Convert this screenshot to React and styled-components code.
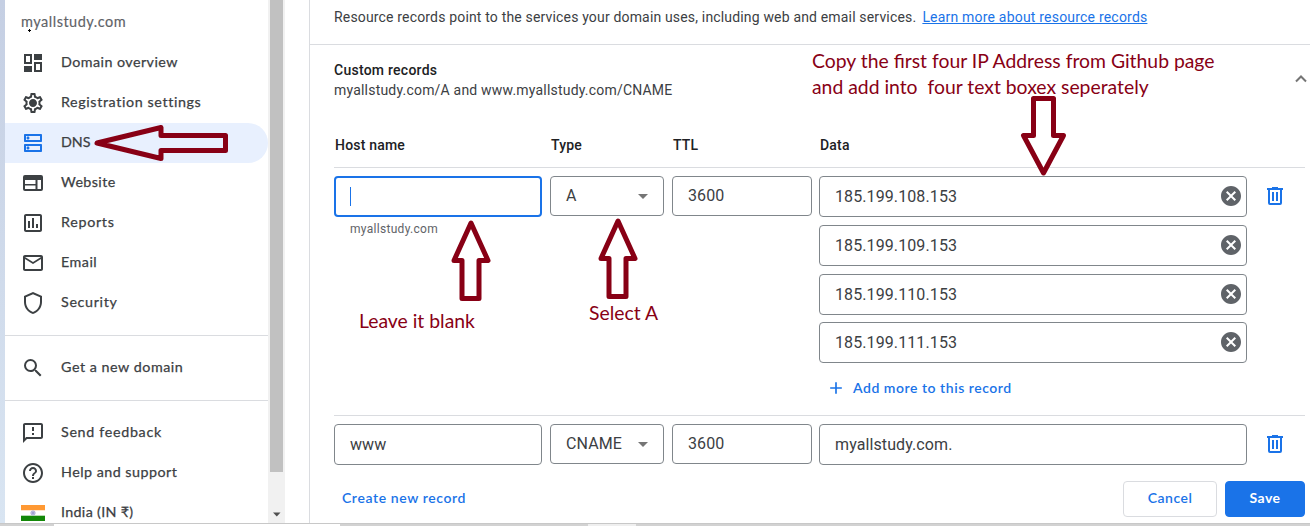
import React from "react";
import styled, { createGlobalStyle } from "styled-components";
import {
  MdOutlineSettings, MdOutlineDns, MdOutlineAssessment, MdMailOutline,
  MdSearch, MdOutlineFeedback, MdHelpOutline, MdCancel, MdAdd, MdArrowDropDown,
} from "react-icons/md";

const Global = createGlobalStyle`
  *, *::before, *::after { box-sizing: border-box; }
  body { margin: 0; background: #fff; overflow: hidden; }
`;

const brand = `"Lato", "Inter", sans-serif`;
const body = `"Roboto", "Liberation Sans", sans-serif`;

const Screen = styled.div`
  position: relative;
  width: 1310px;
  height: 526px;
  display: flex;
  flex-direction: column;
  overflow: hidden;
  background: #fff;
  font-family: ${body};
  color: #3c4043;
`;
const Columns = styled.div`
  display: flex;
  height: 523px;
  flex: none;
  overflow: hidden;
`;
const Edge = styled.div`
  width: 5px;
  flex: none;
  background: linear-gradient(#c5cfe3, #d9e5f2);
`;
const Sidebar = styled.nav`
  width: 263px;
  flex: none;
  height: 523px;
  overflow: hidden;
`;
const SiteName = styled.div`
  height: 43px;
  padding: 1px 0 0 16px;
  font: 400 14.5px/42px ${brand};
  letter-spacing: 0.5px;
  -webkit-text-stroke: 0.15px currentColor;
  color: #5f6368;
`;
const NavRow = styled.a`
  display: flex;
  align-items: center;
  height: 40px;
  padding-left: 16px;
  gap: 16px;
  border-radius: 0 20px 20px 0;
  background: ${(p) => (p.$active ? "#e8f0fe" : "transparent")};
  svg { flex: none; color: ${(p) => (p.$active ? "#1a73e8" : "#3c4043")}; }
`;
const NavLabel = styled.span`
  font: 400 14.3px/20px ${brand};
  letter-spacing: ${(p) => p.$track}px;
  -webkit-text-stroke: 0.25px currentColor;
  padding-bottom: 2px;
  white-space: nowrap;
`;
const Divider = styled.div`
  height: 1px;
  margin: 12px 0;
  background: #dadce0;
`;
const Scrollbar = styled.div`
  width: 17px;
  flex: none;
  display: flex;
  flex-direction: column;
  align-items: center;
  justify-content: space-between;
  background: #f1f1f1;
  padding-bottom: 6px;
`;
const Thumb = styled.div`
  width: 13px;
  height: 472px;
  background: #c1c1c1;
`;
const Main = styled.main`
  flex: 1;
  margin-left: 24px;
  border-left: 1px solid #dadce0;
  display: flex;
  flex-direction: column;
  & > * { flex: none; }
`;
const Intro = styled.p`
  margin: 0;
  height: 45px;
  padding: 7px 0 0 24px;
  border-bottom: 1px solid #dadce0;
  font-size: 14px;
  line-height: 20px;
  letter-spacing: 0.167px;
  white-space: nowrap;
`;
const Link = styled.a`
  color: #1a73e8;
  text-decoration: underline;
  letter-spacing: 0.2px;
  margin-left: 2.5px;
`;
const SectionHead = styled.header`
  display: flex;
  justify-content: space-between;
  height: 78px;
  padding: 15px 3px 0 24px;
  font-size: 14px;
  line-height: 20px;
  svg { margin-top: 15px; }
`;
const Title = styled.h2`
  margin: 0;
  font-size: 14px;
  line-height: 20px;
  font-weight: 500;
  letter-spacing: 0.25px;
  color: #202124;
`;
const Summary = styled.div`
  letter-spacing: 0.2px;
`;
const Grid = styled.div`
  display: grid;
  grid-template-columns: 208px 114px 140px 427px 1fr;
  column-gap: 8px;
  margin: 0 5px 0 24px;
  border-bottom: ${(p) => (p.$line ? "1px solid #dadce0" : "0")};
  height: ${(p) => p.$h}px;
  padding-top: ${(p) => p.$top}px;
  align-items: start;
  & > :nth-child(n + 4) { margin-left: -1px; }
`;
const ColumnName = styled.span`
  font-size: 14px;
  line-height: 20px;
  font-weight: 500;
  letter-spacing: 0.2px;
  padding-left: 1px;
  color: #202124;
`;
const Field = styled.div`
  display: flex;
  align-items: center;
  height: ${(p) => p.$h || 41}px;
  border: ${(p) => (p.$focus ? "2px solid #1a73e8" : "1px solid #80868b")};
  border-radius: 4px;
  padding: 0 ${(p) => p.$end || 3}px 0 ${(p) => (p.$focus ? 14 : 15)}px;
  font-size: 16px;
  line-height: 24px;
  svg { margin: 0 0 1px auto; flex: none; }
`;
const Value = styled.span`
  padding: ${(p) => (p.$raised ? "0 0 1px" : "1px 0 0")};
  letter-spacing: 0.1px;
`;
const Caret = styled.span`
  width: 1px;
  height: 19px;
  background: #1a73e8;
`;
const Hint = styled.div`
  padding: 4px 0 0 16px;
  font-size: 12px;
  line-height: 16px;
  letter-spacing: 0.3px;
  color: #5f6368;
`;
const DataList = styled.div`
  display: flex;
  flex-direction: column;
  gap: 8px;
  margin-bottom: 7px;
  & > :nth-child(4) { margin-top: -1px; }
`;
const TextButton = styled.button`
  display: flex;
  align-items: center;
  gap: 7px;
  height: 36px;
  padding: 0 8px 0 ${(p) => p.$start}px;
  border: 0;
  background: none;
  color: #1a73e8;
  font: 600 14px/20px ${brand};
  letter-spacing: ${(p) => p.$track}px;
`;
const TrashCell = styled.div`
  padding: 8px 0 0 9px;
  line-height: 0;
`;
const Footer = styled.footer`
  display: flex;
  align-items: flex-start;
  gap: 8px;
  height: 58px;
  padding: 16px 5px 0 24px;
  & > :first-child { margin-top: -1px; }
`;
const Button = styled.button`
  width: ${(p) => p.$w}px;
  height: 36px;
  padding: 0 0 2px;
  border-radius: 4px;
  border: 1px solid ${(p) => (p.$primary ? "#1a73e8" : "#dadce0")};
  background: ${(p) => (p.$primary ? "#1a73e8" : "#fff")};
  color: ${(p) => (p.$primary ? "#fff" : "#1a73e8")};
  font: ${(p) => (p.$primary ? 700 : 600)} 14px/20px ${brand};
  letter-spacing: 0.5px;
  &:first-of-type { margin-left: auto; }
`;
const BottomBar = styled.div`
  display: flex;
  height: 3px;
  border-top: 1px solid #c8c8c8;
`;
const Segment = styled.div`
  width: ${(p) => p.$w}px;
  background: ${(p) => p.$c};
`;
const Note = styled.div`
  position: absolute;
  left: ${(p) => p.$x}px;
  top: ${(p) => p.$y}px;
  font: 400 19.35px/26px "Lato", sans-serif;
  color: #880015;
  white-space: pre;
`;
const ArrowSvg = styled.svg`
  position: absolute;
  left: ${(p) => p.$x}px;
  top: ${(p) => p.$y}px;
  fill: ${(p) => p.$fill};
  stroke: #880015;
  stroke-width: 5;
  stroke-linejoin: round;
`;
const Crosshair = styled.svg`
  position: absolute;
  left: 28px;
  top: 29px;
`;

const DashboardIcon = () => (
  <svg width="24" height="24" fill="currentColor" fillRule="evenodd">
    <path d="M3 3h8v10H3zM5 5v6h4V5zM13 3h8v6h-8zM3 15h8v6H3zM13 11h8v10h-8zM15 13v6h4v-6z" />
  </svg>
);
const GearIcon = () => (
  <svg width="24" height="24">
    <MdOutlineSettings size={24} />
    <circle cx="12" cy="12" r="3" fill="currentColor" />
  </svg>
);
const WebIcon = () => (
  <svg width="24" height="24" fill="currentColor" fillRule="evenodd">
    <path d="M4 4h16a2 2 0 0 1 2 2v12a2 2 0 0 1-2 2H4a2 2 0 0 1-2-2V6a2 2 0 0 1 2-2zM4 9v4h10.500V9zM4 14.500V18h10.500v-3.500zM16.500 9v9H20V9z" />
  </svg>
);
const ShieldIcon = () => (
  <svg width="24" height="24" fill="currentColor" fillRule="evenodd">
    <path d="M12 1 3 5v6c0 5.550 3.840 10.740 9 12 5.160-1.260 9-6.450 9-12V5zM12 3.190l7 3.110V11c0 4.520-2.980 8.690-7 9.930C7.980 19.690 5 15.520 5 11V6.300z" />
  </svg>
);
const FlagIcon = () => (
  <svg width="24" height="24">
    <rect y="4" width="24" height="5.500" fill="#ff9933" />
    <rect y="9.500" width="24" height="5.500" fill="#fff" />
    <rect y="14.700" width="24" height="5.300" fill="#138808" />
    <circle cx="12" cy="12" r="2.200" fill="#c3c3e4" stroke="#a5a5d2" strokeWidth=".8" />
    <circle cx="12" cy="12" r=".8" fill="#7777b8" />
  </svg>
);
const TrashIcon = () => (
  <svg width="24" height="24" fill="#1a73e8" fillRule="evenodd">
    <path d="M9 3h6v1h5v2h-1v13a2 2 0 0 1-2 2H7a2 2 0 0 1-2-2V6H4V4h5zM7 6v13h10V6zM9 8h2v9H9zM13 8h2v9h-2z" />
  </svg>
);

const navMain = [
  [DashboardIcon, "Domain overview", 0.45],
  [GearIcon, "Registration settings", 0.61],
  [MdOutlineDns, "DNS", 0],
  [WebIcon, "Website", 0.4],
  [MdOutlineAssessment, "Reports", 0.7],
  [MdMailOutline, "Email", 0.5],
  [ShieldIcon, "Security", 0.67],
];
const navMore = [
  [MdOutlineFeedback, "Send feedback", 0.68],
  [MdHelpOutline, "Help and support", 0.48],
  [FlagIcon, "India (IN ₹)", 0.33],
];
const addresses = ["185.199.108.153", "185.199.109.153", "185.199.110.153", "185.199.111.153"];

const NavItem = ({ icon: Icon, label, track }) => (
  <NavRow $active={label === "DNS"}>
    <Icon size={24} />
    <NavLabel $track={track}>{label}</NavLabel>
  </NavRow>
);
const Select = ({ value }) => (
  <Field $h={40} $end={8}>
    <Value $raised>{value}</Value>
    <MdArrowDropDown size={24} color="#757575" />
  </Field>
);
const UpArrow = ({ x, y }) => (
  <ArrowSvg $x={x} $y={y} $fill="#fff" width="42" height="84">
    <path d="M21 5 38 42.500H29V80.500H12V42.500H4z" />
  </ArrowSvg>
);

export default function App() {
  return (
    <Screen>
      <Global />
      <Columns>
        <Edge />
        <Sidebar>
          <SiteName>myallstudy.com</SiteName>
          {navMain.map(([icon, label, track]) => (
            <NavItem key={label} icon={icon} label={label} track={track} />
          ))}
          <Divider />
          <NavItem icon={MdSearch} label="Get a new domain" track={0.53} />
          <Divider />
          {navMore.map(([icon, label, track]) => (
            <NavItem key={label} icon={icon} label={label} track={track} />
          ))}
        </Sidebar>
        <Scrollbar>
          <Thumb />
          <svg width="8" height="5"><path d="M0 .5h7.500L3.750 4.500z" fill="#505050" /></svg>
        </Scrollbar>
        <Main>
          <Intro>
            Resource records point to the services your domain uses, including web and email services.{" "}
            <Link>Learn more about resource records</Link>
          </Intro>
          <SectionHead>
            <div>
              <Title>Custom records</Title>
              <Summary>myallstudy.com/A and www.myallstudy.com/CNAME</Summary>
            </div>
            <svg width="12" height="8" fill="none" stroke="#757575" strokeWidth="2">
              <path d="M1 6.500 6 1.500l5 5" />
            </svg>
          </SectionHead>
          <Grid $h={45} $top={12} $line>
            <ColumnName>Host name</ColumnName>
            <ColumnName>Type</ColumnName>
            <ColumnName>TTL</ColumnName>
            <ColumnName>Data</ColumnName>
          </Grid>
          <Grid $h={248} $top={8} $line>
            <div>
              <Field $focus><Caret /></Field>
              <Hint>myallstudy.com</Hint>
            </div>
            <Select value="A" />
            <Field $h={40}><Value $raised>3600</Value></Field>
            <div>
              <DataList>
                {addresses.map((ip) => (
                  <Field key={ip}><Value>{ip}</Value><MdCancel size={24} color="#5f6368" /></Field>
                ))}
              </DataList>
              <TextButton $track={0.53} $start={7} type="button">
                <MdAdd size={20} />Add more to this record
              </TextButton>
            </div>
            <TrashCell><TrashIcon /></TrashCell>
          </Grid>
          <Grid $h={49} $top={8}>
            <Field><Value>www</Value></Field>
            <Select value="CNAME" />
            <Field $h={40}><Value $raised>3600</Value></Field>
            <Field><Value>myallstudy.com.</Value></Field>
            <TrashCell><TrashIcon /></TrashCell>
          </Grid>
          <Footer>
            <TextButton as="a" $track={0.6} $start={8}>Create new record</TextButton>
            <Button $w={94}>Cancel</Button>
            <Button $w={80} $primary>Save</Button>
          </Footer>
        </Main>
      </Columns>
      <BottomBar>
        <Segment $w={54} $c="#d2d2d2" />
        <Segment $w={286} $c="#fff" />
        <Segment $w={248} $c="#d2d2d2" />
        <Segment $w={48} $c="#efefef" />
        <Segment $w={674} $c="#d2d2d2" />
      </BottomBar>

      <Crosshair width="3" height="3" fill="#000"><path d="M1 0h1v1h1v1H2v1H1V2H0V1h1z" /></Crosshair>
      <ArrowSvg $x={90} $y={122} $fill="none" width="142" height="42">
        <path d="M7 21 71 5.500v8h64.500v15H71v8z" />
      </ArrowSvg>
      <ArrowSvg $x={1018} $y={94} $fill="#fff" width="52" height="84">
        <path d="M15.500 4.500h20v37h10L25.500 79 5.500 41.500h10z" />
      </ArrowSvg>
      <UpArrow x={449.5} y={218} />
      <UpArrow x={596.5} y={216} />
      <Note $x={812} $y={48}>{"Copy the first four IP Address from Github page\nand add into  four text boxex seperately"}</Note>
      <Note $x={359} $y={308}>Leave it blank</Note>
      <Note $x={589} $y={300}>Select A</Note>
    </Screen>
  );
}
